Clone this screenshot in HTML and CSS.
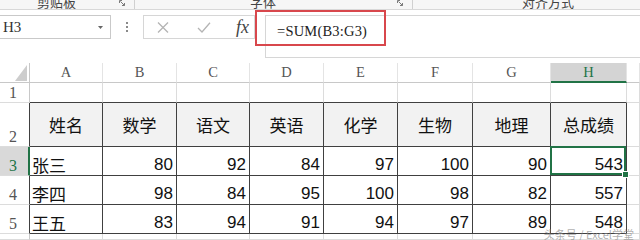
FILE: index.html
```html
<!DOCTYPE html>
<html lang="zh">
<head>
<meta charset="utf-8">
<link rel="stylesheet" href="styles.css">
</head>
<body>
<div class="ribbon">
  <div class="group g1"><span class="gl">剪贴板</span><svg class="launch" width="7" height="7" viewBox="0 0 7 7"><path d="M0.5 3 V0.5 H3 M1.5 1.5 L5.5 5.5 M5.5 3 V5.5 H3" stroke="#7a7a7a" stroke-width="1" fill="none"/></svg></div>
  <div class="vsep"></div>
  <div class="group g2"><span class="gl">字体</span><svg class="launch" width="7" height="7" viewBox="0 0 7 7"><path d="M0.5 3 V0.5 H3 M1.5 1.5 L5.5 5.5 M5.5 3 V5.5 H3" stroke="#7a7a7a" stroke-width="1" fill="none"/></svg></div>
  <div class="vsep"></div>
  <div class="group g3"><span class="gl">对齐方式</span></div>
</div>
<div class="fbar">
  <div class="namebox"><span class="nb-text">H3</span><svg class="nb-arrow" width="5" height="3" viewBox="0 0 5 3"><path d="M0 0 H5 L2.5 3 Z" fill="#666"/></svg></div>
  <div class="dots"><i></i><i></i><i></i></div>
  <div class="btns">
    <svg class="b-x" width="12" height="11" viewBox="0 0 12 11"><path d="M1 0.5 L11 10.5 M11 0.5 L1 10.5" stroke="#b4b4b4" stroke-width="1.3" fill="none"/></svg>
    <svg class="b-ok" width="14" height="11" viewBox="0 0 14 11"><path d="M1 6 L5 10 L13 0.8" stroke="#b4b4b4" stroke-width="1.3" fill="none"/></svg>
    <span class="fx">fx</span>
  </div>
  <div class="finput">=SUM(B3:G3)</div>
  <div class="redbox"></div>
</div>
<div class="sheet">
  <div class="c corner"><svg width="29" height="19" viewBox="0 0 29 19"><polygon points="27,2 15,18 27,18" fill="#cdcdcd"/></svg></div>
  <div class="c ch">A</div><div class="c ch">B</div><div class="c ch">C</div><div class="c ch">D</div><div class="c ch">E</div><div class="c ch">F</div><div class="c ch">G</div><div class="c ch sel">H</div><div class="c ch"></div>

  <div class="c rh">1</div>
  <div class="c r1"></div><div class="c r1"></div><div class="c r1"></div><div class="c r1"></div><div class="c r1"></div><div class="c r1"></div><div class="c r1"></div><div class="c r1"></div><div class="c"></div>

  <div class="c rh tb">2</div>
  <div class="c d hd">姓名</div><div class="c d hd">数学</div><div class="c d hd">语文</div><div class="c d hd">英语</div><div class="c d hd">化学</div><div class="c d hd">生物</div><div class="c d hd">地理</div><div class="c d hd">总成绩</div><div class="c"></div>

  <div class="c rh tb selr">3</div>
  <div class="c d name">张三</div><div class="c d num">80</div><div class="c d num">92</div><div class="c d num">84</div><div class="c d num">97</div><div class="c d num">100</div><div class="c d num">90</div><div class="c d num active">543</div><div class="c"></div>

  <div class="c rh tb">4</div>
  <div class="c d name">李四</div><div class="c d num">98</div><div class="c d num">84</div><div class="c d num">95</div><div class="c d num">100</div><div class="c d num">98</div><div class="c d num">82</div><div class="c d num">557</div><div class="c"></div>

  <div class="c rh tb">5</div>
  <div class="c d name">王五</div><div class="c d num">83</div><div class="c d num">94</div><div class="c d num">91</div><div class="c d num">94</div><div class="c d num">97</div><div class="c d num">89</div><div class="c d num">548</div><div class="c"></div>

  <div class="c rh last"></div>
  <div class="c"></div><div class="c"></div><div class="c"></div><div class="c"></div><div class="c"></div><div class="c"></div><div class="c"></div><div class="c"></div><div class="c"></div>
</div>
<div class="watermark">头条号 / Excel学堂</div>
</body>
</html>
```

FILE: styles.css
```css
* { box-sizing: border-box; }
html, body { margin: 0; padding: 0; }
body {
  width: 640px;
  height: 240px;
  overflow: hidden;
  position: relative;
  background: #ffffff;
  font-family: "Noto Sans CJK SC", sans-serif;
  color: #000;
}

/* ribbon strip */
.ribbon {
  height: 10px;
  display: flex;
  background: #f6f6f6;
  border-bottom: 1px solid #d8d8d8;
  overflow: hidden;
}
.group { display: flex; align-items: flex-start; }
.g1 { width: 134px; padding-left: 37px; }
.g2 { width: 277px; padding-left: 115px; }
.g3 { flex: 1; padding-left: 109px; }
.gl {
  font-size: 13px;
  line-height: 13px;
  margin-top: -5px;
  color: #444;
  white-space: nowrap;
}
.launch { margin-left: auto; margin-right: 8px; margin-top: 0; flex: none; }
.vsep { width: 1px; height: 9px; background: #d0d0d0; flex: none; }

/* formula bar */
.fbar {
  position: relative;
  height: 48px;
  display: flex;
  align-items: flex-start;
  padding-top: 5px;
  background: #ffffff;
}
.namebox {
  width: 111px;
  height: 24px;
  border: 1px solid #c9c9c9;
  border-left: none;
  display: flex;
  align-items: center;
  padding-left: 3px;
  padding-right: 7px;
  font-family: "Liberation Serif", serif;
  font-size: 15px;
  color: #333;
  flex: none;
}
.nb-text { line-height: 20px; }
.nb-arrow { margin-left: auto; }
.dots {
  width: 32px;
  height: 24px;
  display: flex;
  flex-direction: column;
  align-items: center;
  justify-content: center;
  gap: 2.5px;
  flex: none;
}
.dots i { display: block; width: 1.5px; height: 1.5px; background: #8a8a8a; }
.btns {
  width: 112px;
  height: 24px;
  border: 1px solid #d6d6d6;
  display: flex;
  align-items: center;
  padding-left: 13px;
  margin-right: 10px;
  flex: none;
}
.b-x { margin-right: 28px; }
.b-ok { margin-right: 25px; }
.fx {
  font-family: "Liberation Serif", serif;
  font-style: italic;
  font-size: 18px;
  line-height: 20px;
  color: #444;
}
.finput {
  flex: 1;
  height: 43px;
  border: 1px solid #d6d6d6;
  border-right: none;
  padding-left: 11px;
  padding-top: 5px;
  font-family: "Liberation Serif", serif;
  font-size: 14.5px;
  line-height: 20px;
  letter-spacing: 0.2px;
  color: #222;
  white-space: nowrap;
}
.redbox {
  position: absolute;
  left: 255px;
  top: 0;
  width: 131px;
  height: 36px;
  border: 2px solid #d8474c;
}

/* sheet grid */
.sheet {
  margin-top: 5px;
  height: 177px;
  overflow: hidden;
  display: grid;
  grid-template-columns: 30px 73px 74px 73px 74px 74px 75px 78px 76px 1fr;
  grid-template-rows: 20px 20px 44px 29px 29px 29px 1fr;
}
.c {
  border-right: 1px solid #dcdcdc;
  border-bottom: 1px solid #dcdcdc;
  min-width: 0;
}
.corner { border-right-color: #c8c8c8; border-bottom-color: #c8c8c8; }
.corner svg { display: block; }
.ch {
  font-family: "Liberation Serif", serif;
  font-size: 14.5px;
  line-height: 19px;
  text-align: center;
  color: #555;
  border-right-color: #e4e4e4;
  border-bottom-color: #c8c8c8;
}
.ch.sel {
  background: #d4d4d4;
  color: #217346;
  border-bottom: 2px solid #217346;
}
.rh {
  font-family: "Liberation Serif", serif;
  font-size: 16px;
  line-height: 16px;
  color: #555;
  display: flex;
  align-items: flex-end;
  justify-content: center;
  padding-right: 3px;
  padding-bottom: 1px;
  border-right-color: #c8c8c8;
  border-bottom-color: #dcdcdc;
}
.rh.tb { border-right-color: #404040; }
.rh.selr {
  background: #d9d9d9;
  color: #217346;
  border-right: 2px solid #217346;
  padding-right: 2px;
}
.r1 { border-bottom-color: #404040; }
.d {
  border-right-color: #404040;
  border-bottom-color: #404040;
  display: flex;
  align-items: flex-end;
  font-size: 17px;
  line-height: 20px;
  white-space: nowrap;
  color: #111;
}
.hd {
  background: #f2f2f2;
  align-items: center;
  justify-content: center;
}
.name { padding-left: 2px; }
.num {
  justify-content: flex-end;
  padding-right: 3px;
  font-family: "Liberation Sans", sans-serif;
}
.active { position: relative; }
.active::after {
  content: "";
  position: absolute;
  top: -1px;
  left: -1px;
  right: 0;
  bottom: 0;
  border: 2px solid #217346;
}
.active::before {
  content: "";
  position: absolute;
  right: -3px;
  bottom: -3px;
  width: 5px;
  height: 5px;
  background: #217346;
  border: 1px solid #ffffff;
  z-index: 2;
}
.watermark {
  position: absolute;
  right: 6px;
  bottom: 0;
  font-size: 11px;
  line-height: 12px;
  color: rgba(140, 140, 140, 0.7);
}
```
